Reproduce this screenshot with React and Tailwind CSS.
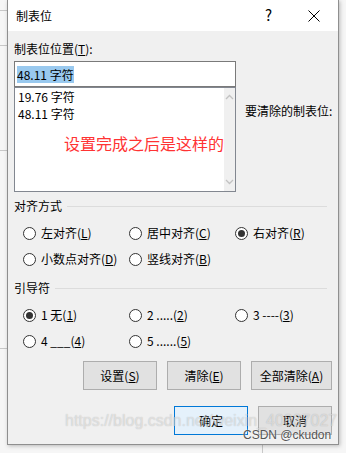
import React from 'react';

const Radio = ({ checked, children }) => (
  <div className="flex items-center h-[20px]">
    <span className="w-[13px] h-[13px] rounded-full border border-[#333333] bg-white flex items-center justify-center shrink-0">
      {checked && <span className="w-[7px] h-[7px] rounded-full bg-[#333333]"></span>}
    </span>
    <span className="ml-[5px] whitespace-pre">{children}</span>
  </div>
);

const Group = ({ title, className }) => (
  <div className={`flex items-center h-[16px] ${className}`}>
    <span className="leading-[16px]">{title}</span>
    <div className="flex-1 h-px bg-[#dcdcdc] ml-[5px] mr-[5px]"></div>
  </div>
);

const Btn = ({ children, primary, w }) => (
  <div
    className={`h-[29px] flex items-center justify-center border ${w} ${
      primary ? 'border-[#0078d7] bg-[#e5f1fb]' : 'border-[#adadad] bg-[#e1e1e1]'
    }`}
  >
    {children}
  </div>
);

const App = () => {
  return (
    <div
      className="w-[346px] h-[453px] bg-[#f6f6f6] relative overflow-hidden text-[12px] text-black"
      style={{ fontFamily: '"Noto Sans CJK SC", "Noto Sans", sans-serif' }}
    >
      {/* document behind the dialog */}
      <div className="absolute left-0 top-[10px] w-[7px] h-px bg-[#c8c8c8]"></div>
      <div className="absolute left-0 top-[45px] w-[7px] h-px bg-[#c8c8c8]"></div>
      <div className="absolute left-0 top-[150px] w-[7px] h-px bg-[#c8c8c8]"></div>
      <div className="absolute left-0 top-[348px] w-[7px] h-px bg-[#c8c8c8]"></div>
      <div className="absolute left-[262px] top-[445px] w-px h-[8px] bg-[#c8c8c8]"></div>

      <div className="relative ml-[7px] w-[332px] h-[445px] border border-t-0 border-[#8f8f8f] bg-[#f0f0f0] shadow-[1px_1px_4px_rgba(0,0,0,0.25)] flex flex-col">
        {/* title bar */}
        <div className="h-[31px] bg-white flex items-center pl-[8px] shrink-0">
          <span>制表位</span>
          <span className="ml-auto text-[15px] mr-[36px]">?</span>
          <svg width="12" height="12" viewBox="0 0 12 12" className="mr-[18px]">
            <path d="M0.5 0.5L11.5 11.5M11.5 0.5L0.5 11.5" stroke="#000" strokeWidth="1" />
          </svg>
        </div>

        <div className="px-[6px] flex flex-col">
          <div className="flex">
            <div className="w-[222px] flex flex-col">
              <div className="mt-[10px] leading-[16px]">
                制表位位置(<u>T</u>):
              </div>
              <div className="mt-[4px] h-[26px] border border-[#7a7a7a] bg-white flex items-center pl-[2px]">
                <span className="bg-[#99c9ef] leading-[17px]">48.11 字符</span>
              </div>
              <div className="h-[105px] border border-[#828790] bg-white flex">
                <div className="flex-1 pl-[3px] leading-[17px]">
                  <div>19.76 字符</div>
                  <div>48.11 字符</div>
                  <div className="mt-[11px] pl-[46px] text-[16px] leading-[20px] text-[#ff3333] whitespace-nowrap">
                    设置完成之后是这样的
                  </div>
                </div>
                <div className="w-[17px] bg-[#f0f0f0] flex flex-col items-center justify-between py-[6px]">
                  <svg width="9" height="6" viewBox="0 0 9 6">
                    <path d="M1 5L4.5 1.5L8 5" stroke="#c2c2c2" strokeWidth="1.3" fill="none" />
                  </svg>
                  <svg width="9" height="6" viewBox="0 0 9 6">
                    <path d="M1 1L4.5 4.5L8 1" stroke="#c2c2c2" strokeWidth="1.3" fill="none" />
                  </svg>
                </div>
              </div>
            </div>
            <div className="ml-[9px] pt-[72px] leading-[16px] whitespace-nowrap">要清除的制表位:</div>
          </div>

          <Group title="对齐方式" className="mt-[6px]" />
          <div className="pl-[9px] grid grid-cols-[106px_106px_106px] mt-[9px] gap-y-[6px]">
            <Radio>左对齐(<u>L</u>)</Radio>
            <Radio>居中对齐(<u>C</u>)</Radio>
            <Radio checked>右对齐(<u>R</u>)</Radio>
            <Radio>小数点对齐(<u>D</u>)</Radio>
            <Radio>竖线对齐(<u>B</u>)</Radio>
          </div>

          <Group title="引导符" className="mt-[11px]" />
          <div className="pl-[9px] grid grid-cols-[106px_106px_106px] mt-[9px] gap-y-[6px]">
            <Radio checked>1 无(<u>1</u>)</Radio>
            <Radio>2 .....(<u>2</u>)</Radio>
            <Radio>3 ----(<u>3</u>)</Radio>
            <Radio>4 ___(<u>4</u>)</Radio>
            <Radio>5 ......(<u>5</u>)</Radio>
          </div>

          <div className="mt-[10px] flex justify-end gap-[10px]">
            <Btn w="w-[74px]">设置(<u>S</u>)</Btn>
            <Btn w="w-[74px]">清除(<u>E</u>)</Btn>
            <Btn w="w-[81px]">全部清除(<u>A</u>)</Btn>
          </div>
          <div className="mt-[16px] flex justify-end gap-[10px]">
            <Btn primary w="w-[74px]">确定</Btn>
            <Btn w="w-[74px]">取消</Btn>
          </div>
        </div>
      </div>

      {/* watermark */}
      <div
        className="absolute left-[65px] top-[411px] text-[16px] leading-[20px] text-white/50 [text-shadow:0_0_1px_rgba(0,0,0,0.25)] whitespace-nowrap"
        style={{ fontFamily: '"Liberation Sans", Arial, sans-serif' }}
      >
        https://blog.csdn.net/weixin_40837027
      </div>
      <div
        className="absolute left-[243px] top-[428px] text-[12px] leading-[14px] text-[#555555] [text-shadow:0_0_2px_#ffffff] whitespace-nowrap"
        style={{ fontFamily: '"Liberation Sans", Arial, sans-serif' }}
      >
        CSDN @ckudon
      </div>
    </div>
  );
};

export default App;
